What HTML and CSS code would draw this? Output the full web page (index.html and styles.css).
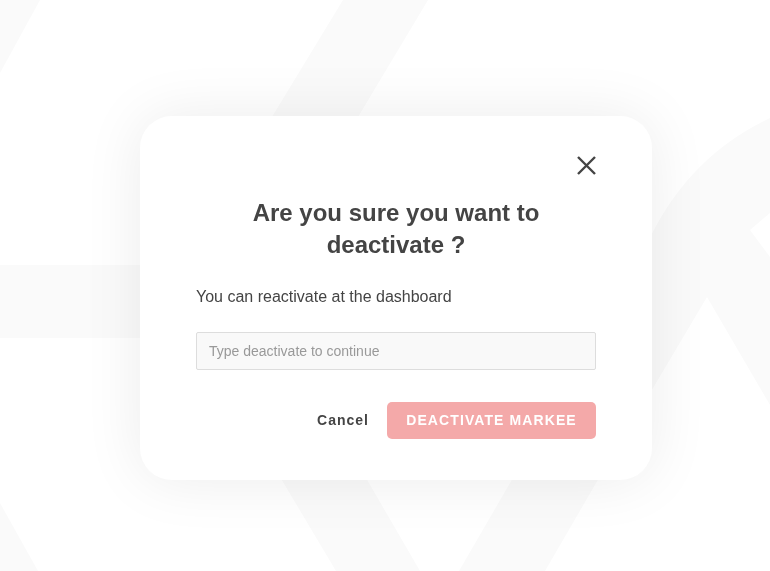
FILE: index.html
```html
<!DOCTYPE html>
<html lang="en">
<head>
    <meta charset="UTF-8">
    <meta name="viewport" content="width=device-width, initial-scale=1.0">
    <title>Deactivate</title>
    <link rel="stylesheet" href="styles.css">
</head>
<body>
    <svg class="backdrop" viewBox="0 0 770 571" preserveAspectRatio="none" aria-hidden="true">
        <polygon points="0,0 40,0 0,73"/>
        <polygon points="343,0 428,0 300,214 213,214"/>
        <rect x="0" y="265" width="160" height="73"/>
        <polygon points="258,440 344,440 420,571 336,571"/>
        <polygon points="535,440 621,440 545,571 459,571"/>
        <polygon points="0,503 38,571 0,571"/>
        <path d="M770,118 Q680,160 640,260 L640,410 L707,297 L770,405 L770,257 L750,230 L770,213 Z"/>
    </svg>

    <div class="overlay">
        <div class="modal" role="dialog" aria-labelledby="modalTitle">
            <div class="modal-top">
                <button class="close-btn" aria-label="Close">
                    <svg width="19" height="19" viewBox="0 0 19 19">
                        <path d="M1 1 L18 18 M18 1 L1 18" stroke="#444" stroke-width="2.4" fill="none"/>
                    </svg>
                </button>
            </div>
            <h2 id="modalTitle" class="modal-title">Are you sure you want to deactivate ?</h2>
            <p class="modal-text">You can reactivate at the dashboard</p>
            <input type="text" class="confirm-input" placeholder="Type deactivate to continue">
            <div class="modal-actions">
                <button class="btn-cancel">Cancel</button>
                <button class="btn-deactivate">Deactivate Markee</button>
            </div>
        </div>
    </div>
</body>
</html>
```

FILE: styles.css
```css
html, body {
    margin: 0;
    height: 100%;
}

body {
    font-family: "Liberation Sans", Arial, sans-serif;
    background-color: #fff;
    color: #444;
    overflow: hidden;
}

.backdrop {
    position: fixed;
    top: 0;
    left: 0;
    width: 100%;
    height: 100%;
    fill: #fafafa;
}

.overlay {
    position: relative;
    box-sizing: border-box;
    min-height: 100vh;
    padding: 24px 0 0 22px;
    display: flex;
    justify-content: center;
    align-items: center;
}

.modal {
    box-sizing: border-box;
    width: 512px;
    height: 364px;
    padding: 40px 56px 41px;
    background-color: #fff;
    border-radius: 32px;
    box-shadow: 0 0 60px rgba(0, 0, 0, 0.08);
    display: flex;
    flex-direction: column;
}

.modal-top {
    display: flex;
    justify-content: flex-end;
    height: 19px;
}

.close-btn {
    padding: 0;
    border: none;
    background: none;
    width: 19px;
    height: 19px;
    cursor: pointer;
    display: block;
}

.close-btn svg {
    display: block;
}

.modal-title {
    margin: 22px auto 0;
    max-width: 300px;
    font-size: 24px;
    line-height: 32px;
    font-weight: bold;
    text-align: center;
    color: #444;
}

.modal-text {
    margin: 26px 0 0;
    font-size: 16px;
    line-height: 20px;
    color: #444;
}

.confirm-input {
    box-sizing: border-box;
    margin-top: 25px;
    width: 100%;
    height: 38px;
    padding: 0 12px;
    border: 1px solid #ddd;
    border-radius: 2px;
    background-color: #f9f9f9;
    font-family: inherit;
    font-size: 14px;
    color: #444;
    outline: none;
}

.confirm-input::placeholder {
    color: #999;
}

.modal-actions {
    margin-top: 32px;
    display: flex;
    justify-content: flex-end;
    align-items: center;
    gap: 18px;
}

.btn-cancel {
    padding: 0;
    border: none;
    background: none;
    font-family: inherit;
    font-size: 14px;
    font-weight: bold;
    letter-spacing: 1px;
    color: #444;
    cursor: pointer;
}

.btn-deactivate {
    width: 209px;
    height: 37px;
    border: none;
    border-radius: 5px;
    background-color: #f4a9a9;
    color: #fff;
    font-family: inherit;
    font-size: 14px;
    font-weight: bold;
    letter-spacing: 1.1px;
    text-transform: uppercase;
    cursor: pointer;
}
```
